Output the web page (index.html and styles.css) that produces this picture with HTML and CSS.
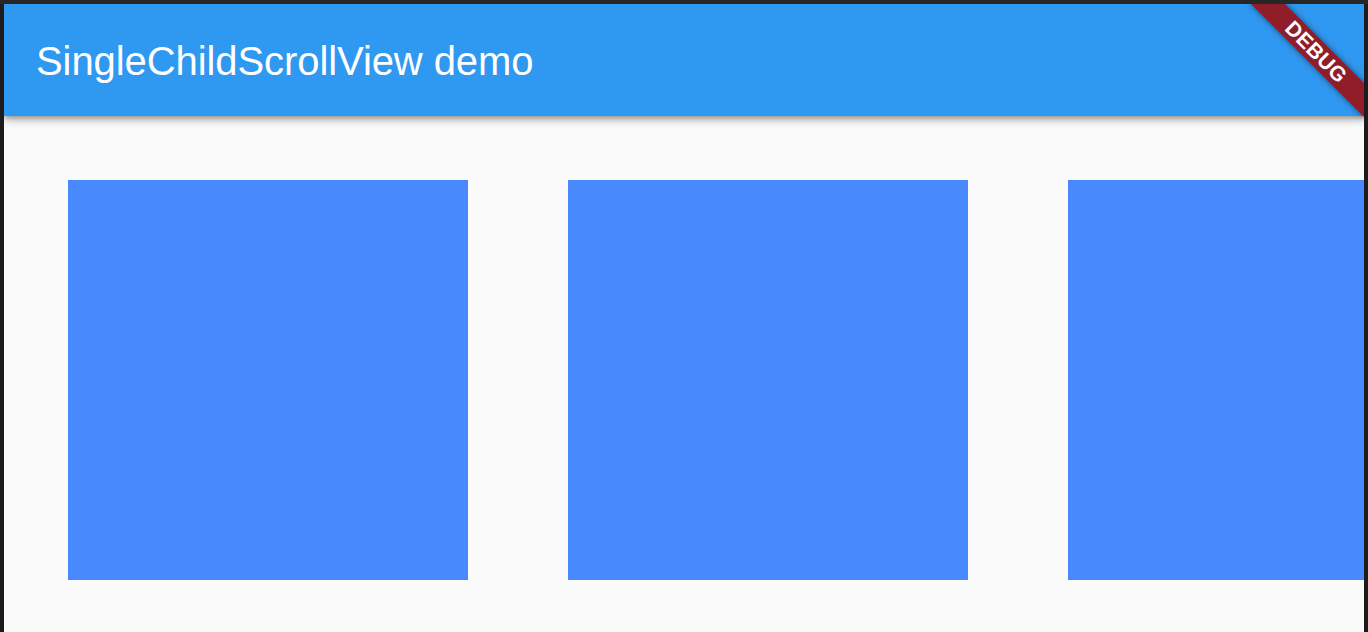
FILE: index.html
```html
<!DOCTYPE html>
<html>
<head>
<meta charset="utf-8">
<link rel="stylesheet" href="styles.css">
</head>
<body>
<div class="screen">
  <div class="frame-top"></div>
  <div class="row">
    <div class="frame-side left"></div>
    <div class="app">
      <header class="appbar"><h1 class="title">SingleChildScrollView demo</h1></header>
      <main class="content">
        <div class="strip">
          <div class="box"></div>
          <div class="box"></div>
          <div class="box"></div>
        </div>
      </main>
      <div class="banner">DEBUG</div>
    </div>
    <div class="frame-side right"></div>
  </div>
</div>
</body>
</html>
```

FILE: styles.css
```css
html, body {
  margin: 0;
  padding: 0;
  width: 1368px;
  height: 632px;
  overflow: hidden;
  background: #1c1c1c;
}
.screen {
  display: flex;
  flex-direction: column;
  width: 1368px;
  height: 632px;
}
.frame-top {
  height: 4px;
  background: #262626;
  flex: none;
}
.row {
  display: flex;
  flex: 1;
  min-height: 0;
}
.frame-side {
  width: 4px;
  flex: none;
  background: #1c1c1c;
}
.app {
  flex: 1;
  position: relative;
  overflow: hidden;
  background: #fafafa;
  display: flex;
  flex-direction: column;
}
.appbar {
  height: 112px;
  flex: none;
  background: #2f98f0;
  box-shadow: 0 4px 8px rgba(0,0,0,0.28), 0 2px 4px rgba(0,0,0,0.18);
  position: relative;
  z-index: 2;
  display: flex;
  align-items: center;
  padding-left: 32px;
}
.title {
  margin: 0;
  font-family: "Liberation Sans", Arial, sans-serif;
  font-weight: 400;
  font-size: 40px;
  color: #ffffff;
  letter-spacing: -0.08px;
  position: relative;
  top: 1px;
}
.content {
  flex: 1;
  padding: 64px 0 0 64px;
  overflow: hidden;
}
.strip {
  display: flex;
  gap: 100px;
}
.box {
  width: 400px;
  height: 400px;
  flex: none;
  background: #488afd;
}
.banner {
  position: absolute;
  z-index: 3;
  width: 160px;
  height: 24px;
  left: calc(100% - 48px - 80px);
  top: calc(48px - 12px);
  transform: rotate(45deg);
  background: #921d2a;
  box-shadow: 0 0 6px rgba(0,0,0,0.5);
  color: #ffffff;
  font-family: "Liberation Sans", Arial, sans-serif;
  font-weight: 700;
  font-size: 21px;
  line-height: 24px;
  text-align: center;
  letter-spacing: 0.3px;
}
```
